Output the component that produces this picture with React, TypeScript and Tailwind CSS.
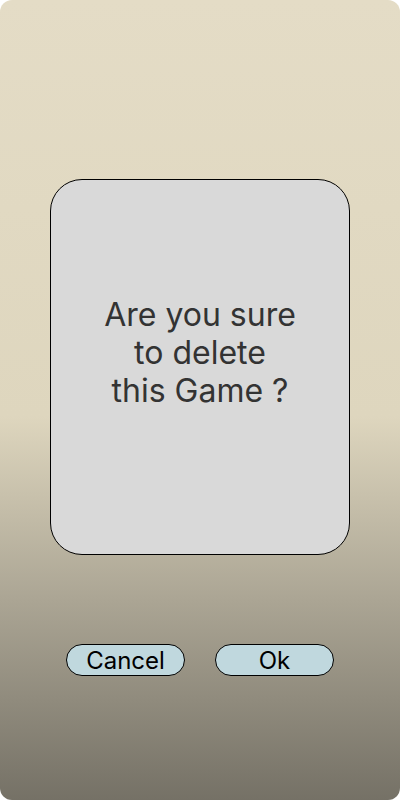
export default function App() {
  return (
    <div className="w-[400px] h-[800px] bg-white font-['Inter',sans-serif]">
      <div className="flex h-full w-full flex-col items-center rounded-[12px] bg-[linear-gradient(180deg,#e4dcc6_0%,#ded6be_52%,#aba594_75%,#757166_100%)] pt-[179px]">
        <div className="flex h-[376px] w-[300px] items-center justify-center rounded-[32px] border border-black bg-[#d9d9d9] pb-[28px]">
          <p className="text-center text-[32px] leading-[38px] text-[#333333]">
            Are you sure
            <br />
            to delete
            <br />
            this Game ?
          </p>
        </div>
        <div className="mt-[89px] flex gap-[30px]">
          <button className="h-[32px] w-[119px] rounded-full border border-black bg-[#c0d8de] pt-[2px] text-[24px] leading-none text-black">
            Cancel
          </button>
          <button className="h-[32px] w-[119px] rounded-full border border-black bg-[#c0d8de] pt-[2px] text-[24px] leading-none text-black">
            Ok
          </button>
        </div>
      </div>
    </div>
  );
}
